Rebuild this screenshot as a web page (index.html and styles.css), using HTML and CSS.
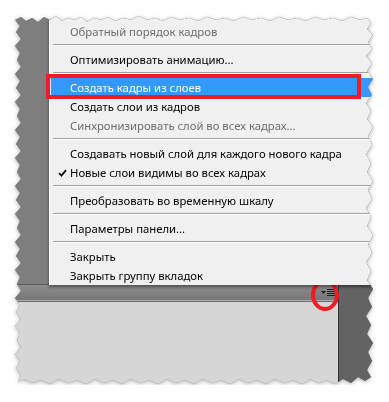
FILE: index.html
```html
<!DOCTYPE html>
<html lang="ru">
<head>
    <meta charset="UTF-8">
    <meta name="viewport" content="width=device-width, initial-scale=1.0">
    <title>Меню панели анимации</title>
    <link rel="stylesheet" href="styles.css">
</head>
<body>
    <div class="shot">
        <div class="paper">
            <div class="workspace"></div>
            <div class="panel-bar">
                <svg class="panel-menu-icon" width="16" height="10" viewBox="0 0 16 10">
                    <path d="M1 3h5l-2.5 3z" fill="#1e1e1e"/>
                    <path d="M7 1.5h8M7 3.5h8M7 5.5h8M7 7.5h8" stroke="#1e1e1e" stroke-width="1"/>
                </svg>
                <span class="mark-circle"></span>
            </div>
            <div class="dock-strip"></div>
            <div class="panel-body"></div>

            <!-- всплывающее меню панели -->
            <ul class="menu">
                <li class="item disabled">Обратный порядок кадров</li>
                <li class="sep"></li>
                <li class="item">Оптимизировать анимацию...</li>
                <li class="sep"></li>
                <li class="item active">Создать кадры из слоев<span class="mark-box"></span></li>
                <li class="item">Создать слои из кадров</li>
                <li class="item disabled">Синхронизировать слой во всех кадрах...</li>
                <li class="sep"></li>
                <li class="item">Создавать новый слой для каждого нового кадра</li>
                <li class="item">
                    <svg class="check" width="9" height="8" viewBox="0 0 9 8">
                        <path d="M1 4.2l2.4 2.4L8 1.2" fill="none" stroke="#111" stroke-width="1.8"/>
                    </svg>Новые слои видимы во всех кадрах</li>
                <li class="sep"></li>
                <li class="item">Преобразовать во временную шкалу</li>
                <li class="sep"></li>
                <li class="item">Параметры панели...</li>
                <li class="sep"></li>
                <li class="item">Закрыть</li>
                <li class="item">Закрыть группу вкладок</li>
            </ul>
        </div>
    </div>
</body>
</html>
```

FILE: styles.css
```css
body {
    margin: 0;
    background: #fff;
    font-family: "Noto Sans", "Open Sans", sans-serif;
}
.shot {
    width: 359px;
    height: 370px;
    margin: 15px 0 0 15px;
    filter: drop-shadow(0 1px 2px rgba(0, 0, 0, 0.3));
}
.paper {
    position: relative;
    width: 100%;
    height: 100%;
    display: grid;
    grid-template-columns: 323px 1fr;
    grid-template-rows: 269px 17px 1fr;
    background: #7e7e7e;
    clip-path: polygon(
        0 5px, 6px 2px, 11px 6px, 17px 3px, 23px 7px, 29px 2px, 35px 5px, 41px 1px, 47px 6px, 53px 3px,
        60px 5px, 66px 2px, 72px 7px, 79px 3px, 86px 5px, 93px 2px, 100px 6px, 108px 3px, 116px 5px, 124px 1px,
        132px 5px, 140px 3px, 148px 6px, 156px 2px, 165px 5px, 174px 3px, 183px 6px, 192px 2px, 201px 5px, 210px 3px,
        219px 6px, 228px 2px, 237px 5px, 246px 3px, 255px 6px, 264px 2px, 273px 5px, 282px 3px, 291px 6px, 300px 2px,
        309px 5px, 318px 3px, 327px 6px, 336px 2px, 345px 5px, 352px 3px,
        356px 8px, 352px 14px, 358px 20px, 353px 27px, 357px 34px, 351px 41px, 357px 48px, 352px 56px, 358px 64px,
        353px 72px, 357px 80px, 351px 88px, 356px 96px, 352px 104px, 358px 112px, 353px 121px, 357px 130px,
        351px 139px, 356px 148px, 352px 157px, 358px 166px, 353px 175px, 357px 184px, 351px 193px, 356px 202px,
        352px 211px, 358px 220px, 353px 229px, 357px 238px, 351px 247px, 356px 256px, 352px 265px, 358px 274px,
        353px 283px, 357px 292px, 351px 301px, 356px 310px, 352px 319px, 358px 328px, 353px 337px, 357px 346px,
        352px 355px, 356px 362px,
        350px 366px, 343px 362px, 336px 368px, 328px 364px, 320px 369px, 312px 365px, 304px 368px, 296px 364px,
        287px 369px, 278px 365px, 269px 368px, 260px 364px, 251px 369px, 242px 365px, 233px 368px, 224px 364px,
        215px 369px, 206px 365px, 197px 368px, 188px 364px, 179px 369px, 170px 365px, 161px 368px, 152px 364px,
        143px 369px, 134px 365px, 125px 368px, 116px 364px, 107px 369px, 98px 365px, 89px 368px, 80px 364px,
        71px 369px, 62px 365px, 53px 368px, 44px 364px, 35px 369px, 26px 365px, 17px 368px, 9px 364px, 3px 367px,
        6px 360px, 1px 353px, 5px 346px, 0 339px, 6px 332px, 2px 325px, 5px 318px, 0 311px, 6px 304px, 1px 297px,
        5px 290px, 0 283px, 6px 276px, 2px 269px, 5px 262px, 0 255px, 6px 248px, 1px 241px, 5px 234px, 0 227px,
        6px 220px, 2px 213px, 5px 206px, 0 199px, 6px 192px, 1px 185px, 5px 178px, 0 171px, 6px 164px, 2px 157px,
        5px 150px, 0 143px, 6px 136px, 1px 129px, 5px 122px, 0 115px, 6px 108px, 2px 101px, 5px 94px, 0 87px,
        6px 80px, 1px 73px, 5px 66px, 0 59px, 6px 52px, 2px 45px, 5px 38px, 0 31px, 6px 24px, 1px 17px, 5px 11px
    );
}
.workspace {
    grid-column: 1 / 3;
    background: #7e7e7e;
}
.panel-bar {
    position: relative;
    display: flex;
    align-items: center;
    justify-content: flex-end;
    padding-right: 2px;
    background: linear-gradient(#8d8d8d, #777);
    border-top: 1px solid #5c5c5c;
    border-bottom: 1px solid #a9a9a9;
}
.panel-menu-icon {
    display: block;
}
.mark-circle {
    position: absolute;
    right: -1px;
    top: -6px;
    width: 20px;
    height: 24px;
    border: 4px solid #ee1c24;
    border-radius: 50%;
}
.dock-strip {
    grid-column: 2;
    grid-row: 2 / 4;
    background: #636363;
    border-left: 1px solid #333;
}
.panel-body {
    background: #d6d6d6;
    border-top: 1px solid #707070;
}
.menu {
    position: absolute;
    left: 34px;
    top: 0;
    right: 0;
    height: 270px;
    margin: 0;
    padding: 7px 0 0;
    list-style: none;
    box-sizing: border-box;
    background: #f0f0f0;
    border-left: 1px solid #fafafa;
    box-shadow: 0 2px 3px rgba(0, 0, 0, 0.45);
    font-size: 11.3px;
    color: #000;
}
.item {
    position: relative;
    height: 19px;
    line-height: 19px;
    margin-left: 1px;
    padding-left: 19px;
    white-space: nowrap;
}
.item.disabled {
    color: #6d6d6d;
}
.item.active {
    background: #3399ff;
    color: #fff;
}
.check {
    position: absolute;
    left: 7px;
    top: 6px;
}
.sep {
    height: 0;
    margin: 3px 0 4px 3px;
    border-top: 1px solid #a0a0a0;
    border-bottom: 1px solid #fff;
}
.mark-box {
    position: absolute;
    left: -5px;
    top: -4px;
    width: 307px;
    height: 17px;
    border: 4px solid #ee1c24;
}
```
